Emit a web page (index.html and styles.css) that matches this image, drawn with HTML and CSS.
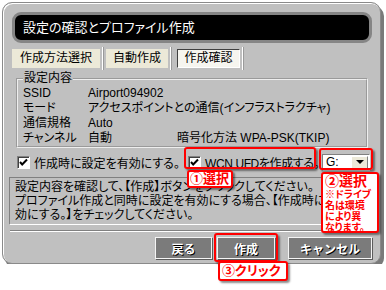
FILE: index.html
```html
<!DOCTYPE html>
<html lang="ja">
<head>
    <meta charset="UTF-8">
    <meta name="viewport" content="width=device-width, initial-scale=1.0">
    <title>設定の確認とプロファイル作成</title>
    <link rel="stylesheet" href="styles.css">
</head>
<body>
    <div class="window">
        <div class="titlebar">設定の確認とプロファイル作成</div>
        <div class="tabs">
            <div class="tab tab-method">作成方法選択</div>
            <span class="sep"></span>
            <div class="tab tab-auto">自動作成</div>
            <span class="sep"></span>
            <div class="tab tab-confirm active">作成確認</div>
            <span class="sep"></span>
        </div>
        <fieldset class="settings">
            <legend>設定内容</legend>
            <div class="row"><span class="key">SSID</span><span>Airport094902</span></div>
            <div class="row"><span class="key">モード</span><span>アクセスポイントとの通信(インフラストラクチャ)</span></div>
            <div class="row"><span class="key">通信規格</span><span>Auto</span></div>
            <div class="row"><span class="key">チャンネル</span><span class="val-channel">自動</span><span>暗号化方法&nbsp;WPA-PSK(TKIP)</span></div>
        </fieldset>
        <div class="options">
            <label class="opt opt-enable">
                <span class="check"><svg width="11" height="11" viewBox="0 0 11 11"><path d="M2 5 L4.2 7.5 L9 2.5" fill="none" stroke="#000" stroke-width="2"/></svg></span>
                作成時に設定を有効にする。
            </label>
            <label class="opt opt-wcn">
                <span class="check"><svg width="11" height="11" viewBox="0 0 11 11"><path d="M2 5 L4.2 7.5 L9 2.5" fill="none" stroke="#000" stroke-width="2"/></svg></span>
                WCN UFDを作成する。
            </label>
            <div class="select"><span>G:</span><span class="arrow"></span></div>
        </div>
        <div class="info">
            設定内容を確認して、【作成】ボタンをクリックしてください。<br>
            プロファイル作成と同時に設定を有効にする場合、【作成時に設定を有<br>
            効にする。】をチェックしてください。
        </div>
        <div class="divider"></div>
        <div class="buttons">
            <button class="btn btn-back">戻る</button>
            <button class="btn btn-create">作成</button>
            <button class="btn btn-cancel">キャンセル</button>
        </div>
    </div>

    <!-- callouts -->
    <div class="mark mark-wcn"></div>
    <div class="mark mark-drive"></div>
    <div class="mark mark-create"></div>
    <div class="mark tag tag-1">①選択</div>
    <div class="mark tag tag-2">
        <div class="tag-title">②選択</div>
        <div class="tag-note">※ドライブ<br>名は環境<br>により異<br>なります。</div>
    </div>
    <div class="mark tag tag-3">③クリック</div>
</body>
</html>
```
FILE: styles.css
```css
body {
    margin: 0;
    background-color: #fff;
    font-family: "Liberation Sans", "Noto Sans CJK JP", sans-serif;
    font-size: 12px;
    color: #000;
    font-feature-settings: "palt";
}
.window {
    position: relative;
    box-sizing: border-box;
    width: 379px;
    height: 262px;
    margin: 2px 0 0 2px;
    padding: 9px 8px 0 9px;
    background-color: #c0c0c0;
    border: 1px solid #8a8a8a;
    border-radius: 10px;
    box-shadow: inset 1px 1px 0 #fff, 3px 4px 0 #7a7a7a;
}
.titlebar {
    height: 25px;
    line-height: 25px;
    padding-left: 8px;
    background-color: #000;
    color: #fff;
    font-size: 13px;
    border: 3px solid #858585;
    border-radius: 9px;
}
/* tabs */
.tabs {
    display: flex;
    align-items: center;
    height: 19px;
    margin-top: 6px;
}
.tab {
    height: 19px;
    line-height: 19px;
    text-align: center;
    background-color: #ece9d8;
    box-sizing: border-box;
}
.tab-method { width: 88px; }
.tab-auto { width: 62px; }
.tab-confirm { width: 63px; margin-left: 3px; }
.tab.active {
    background-color: #f6f5ef;
    border: 1px solid;
    border-color: #404040 #fff #fff #404040;
    line-height: 17px;
}
.sep {
    height: 23px;
    margin: 0 2px;
    border-left: 1px solid #fff;
    border-right: 1px solid #9a9a9a;
}
/* settings group */
.settings {
    margin: 3px 4px 0;
    padding: 0 0 0 5px;
    border: 2px groove #eeeeee;
    min-width: 0;
}
.settings legend {
    padding: 0 1px;
    line-height: 15px;
}
.row {
    display: flex;
    height: 15px;
    line-height: 15px;
    white-space: nowrap;
}
.key { width: 65px; }
.val-channel { width: 89px; }
/* options */
.options {
    display: flex;
    align-items: center;
    height: 20px;
    margin-top: 4px;
    padding-left: 5px;
}
.opt {
    display: flex;
    align-items: center;
    gap: 4px;
    white-space: nowrap;
}
.opt-enable { width: 171px; }
.opt-wcn { width: 134px; letter-spacing: -0.4px; }
.check {
    box-sizing: border-box;
    width: 13px;
    height: 13px;
    background-color: #fff;
    border: 1px solid;
    border-color: #808080 #fff #fff #808080;
    box-shadow: inset 1px 1px 0 #404040;
    display: flex;
    align-items: center;
    justify-content: center;
}
.select {
    box-sizing: border-box;
    width: 48px;
    height: 17px;
    padding: 0 1px 0 3px;
    background-color: #fff;
    border: 1px solid;
    border-color: #808080 #fff #fff #808080;
    display: flex;
    align-items: center;
    justify-content: space-between;
}
.arrow {
    box-sizing: border-box;
    width: 17px;
    height: 13px;
    background-color: #ece9d8;
    border: 1px solid;
    border-color: #fff #808080 #808080 #fff;
    display: flex;
    align-items: center;
    justify-content: center;
}
.arrow::after {
    content: "";
    border-left: 4px solid transparent;
    border-right: 4px solid transparent;
    border-top: 4px solid #000;
}
/* info text */
.info {
    box-sizing: border-box;
    height: 48px;
    margin: 5px -3px 0;
    padding: 2px 5px;
    line-height: 14px;
    white-space: nowrap;
    border: 1px solid;
    border-color: #808080 #fff #fff #808080;
}
.divider {
    margin: 5px -4px 0 -2px;
    border-top: 1px solid #808080;
    border-bottom: 1px solid #fff;
}
/* buttons */
.buttons {
    display: flex;
    justify-content: flex-end;
    gap: 5px;
    margin-top: 5px;
}
.btn {
    box-sizing: border-box;
    height: 22px;
    padding: 0;
    font-family: inherit;
    font-size: 12px;
    font-weight: bold;
    color: #fff;
    text-shadow: 1px 1px 0 #000;
    background-color: #7b7b7b;
    border: 1px solid #f4f4f4;
    box-shadow: 1px 1px 0 #5c5c5c;
}
.btn-back { width: 57px; }
.btn-create { width: 58px; }
.btn-cancel { width: 84px; margin-left: 8px; }
/* callouts */
.mark {
    position: absolute;
    box-sizing: border-box;
    border: 2px solid #f00;
    border-radius: 3px;
    box-shadow: 2px 2px 2px rgba(0, 0, 0, 0.45);
}
.tag {
    background-color: #fff;
    color: #f00;
    font-weight: bold;
    white-space: nowrap;
}
.mark-wcn { left: 184px; top: 147px; width: 132px; height: 22px; }
.mark-drive { left: 319px; top: 148px; width: 54px; height: 22px; }
.mark-create { left: 214px; top: 233px; width: 64px; height: 29px; }
.tag-1 {
    left: 187px;
    top: 170px;
    width: 46px;
    height: 18px;
    padding-left: 1px;
    font-size: 13px;
    line-height: 14px;
}
.tag-2 {
    left: 321px;
    top: 172px;
    width: 58px;
    height: 61px;
    padding: 0 2px;
}
.tag-title {
    font-size: 14px;
    line-height: 15px;
}
.tag-note {
    font-size: 10px;
    line-height: 11px;
}
.tag-3 {
    left: 218px;
    top: 261px;
    width: 70px;
    height: 20px;
    padding-left: 2px;
    font-size: 13px;
    line-height: 16px;
}
```
